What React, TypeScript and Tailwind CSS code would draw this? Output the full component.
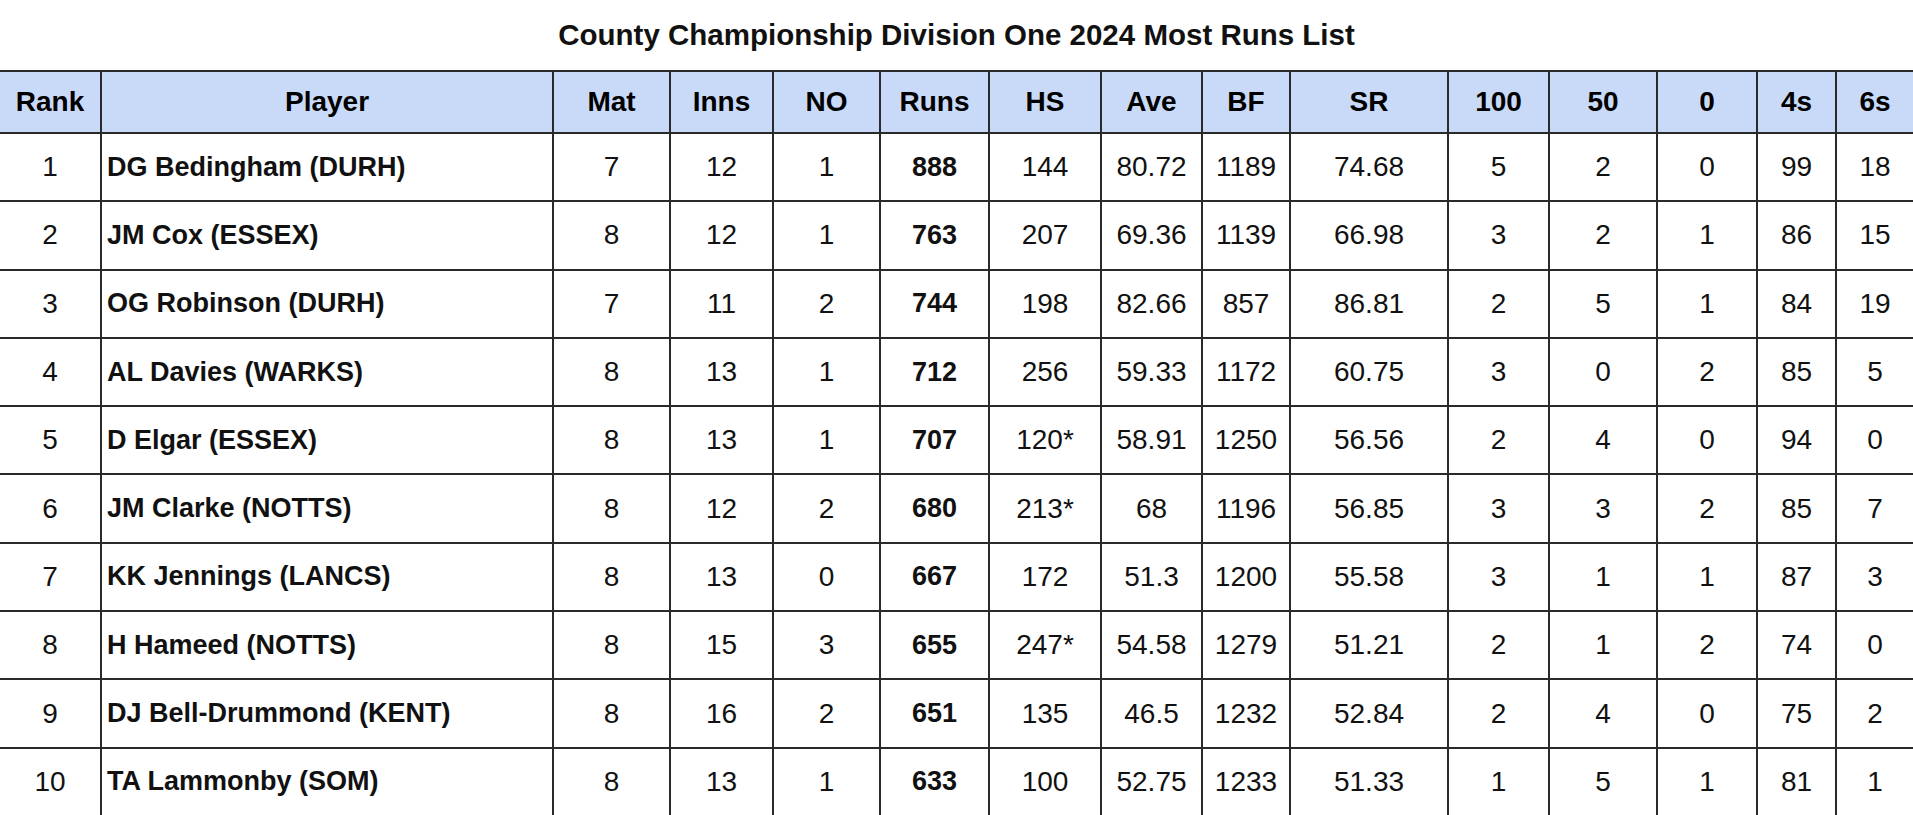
const headers = ["Rank", "Player", "Mat", "Inns", "NO", "Runs", "HS", "Ave", "BF", "SR", "100", "50", "0", "4s", "6s"];

const widths = [101, 452, 117, 103, 107, 109, 112, 101, 88, 158, 101, 108, 100, 79, 77];

const rows: (string | number)[][] = [
  [1, "DG Bedingham (DURH)", 7, 12, 1, 888, "144", "80.72", 1189, "74.68", 5, 2, 0, 99, 18],
  [2, "JM Cox (ESSEX)", 8, 12, 1, 763, "207", "69.36", 1139, "66.98", 3, 2, 1, 86, 15],
  [3, "OG Robinson (DURH)", 7, 11, 2, 744, "198", "82.66", 857, "86.81", 2, 5, 1, 84, 19],
  [4, "AL Davies (WARKS)", 8, 13, 1, 712, "256", "59.33", 1172, "60.75", 3, 0, 2, 85, 5],
  [5, "D Elgar (ESSEX)", 8, 13, 1, 707, "120*", "58.91", 1250, "56.56", 2, 4, 0, 94, 0],
  [6, "JM Clarke (NOTTS)", 8, 12, 2, 680, "213*", "68", 1196, "56.85", 3, 3, 2, 85, 7],
  [7, "KK Jennings (LANCS)", 8, 13, 0, 667, "172", "51.3", 1200, "55.58", 3, 1, 1, 87, 3],
  [8, "H Hameed (NOTTS)", 8, 15, 3, 655, "247*", "54.58", 1279, "51.21", 2, 1, 2, 74, 0],
  [9, "DJ Bell-Drummond (KENT)", 8, 16, 2, 651, "135", "46.5", 1232, "52.84", 2, 4, 0, 75, 2],
  [10, "TA Lammonby (SOM)", 8, 13, 1, 633, "100", "52.75", 1233, "51.33", 1, 5, 1, 81, 1],
];

export default function App() {
  return (
    <div className="w-[1913px] h-[815px] overflow-hidden bg-white text-black" style={{ fontFamily: "'Liberation Sans', Arial, sans-serif" }}>
      {/* title */}
      <div className="h-[70px] flex items-center justify-center">
        <h1 className="text-[29.5px] font-bold leading-none text-[#111]">County Championship Division One 2024 Most Runs List</h1>
      </div>

      <table className="table-fixed border-collapse w-[1913px]">
        <colgroup>
          {widths.map((w, i) => (
            <col key={i} style={{ width: w }} />
          ))}
        </colgroup>
        <thead>
          <tr className="h-[62px] bg-[#c9daf8]">
            {headers.map((h, i) => (
              <th
                key={h}
                className={
                  "border-2 border-[#2a2a2a] text-[28px] font-bold text-center align-middle leading-none" +
                  (i === 0 ? " border-l-0" : "") +
                  (i === headers.length - 1 ? " border-r-0" : "")
                }
              >
                {h}
              </th>
            ))}
          </tr>
        </thead>
        <tbody>
          {rows.map((r) => (
            <tr key={r[0]} className="h-[68.3px]">
              {r.map((c, i) => (
                <td
                  key={i}
                  className={
                    "border-2 border-[#2a2a2a] align-middle leading-none text-[#111]" +
                    (i === 1 ? " text-left pl-[5px] font-bold text-[27px]" : " text-center") +
                    (i === 5 ? " font-bold text-[27px]" : "") +
                    (i !== 1 && i !== 5 ? " text-[28px]" : "") +
                    (i === 0 ? " border-l-0" : "") +
                    (i === r.length - 1 ? " border-r-0" : "")
                  }
                >
                  {c}
                </td>
              ))}
            </tr>
          ))}
        </tbody>
      </table>
    </div>
  );
}
